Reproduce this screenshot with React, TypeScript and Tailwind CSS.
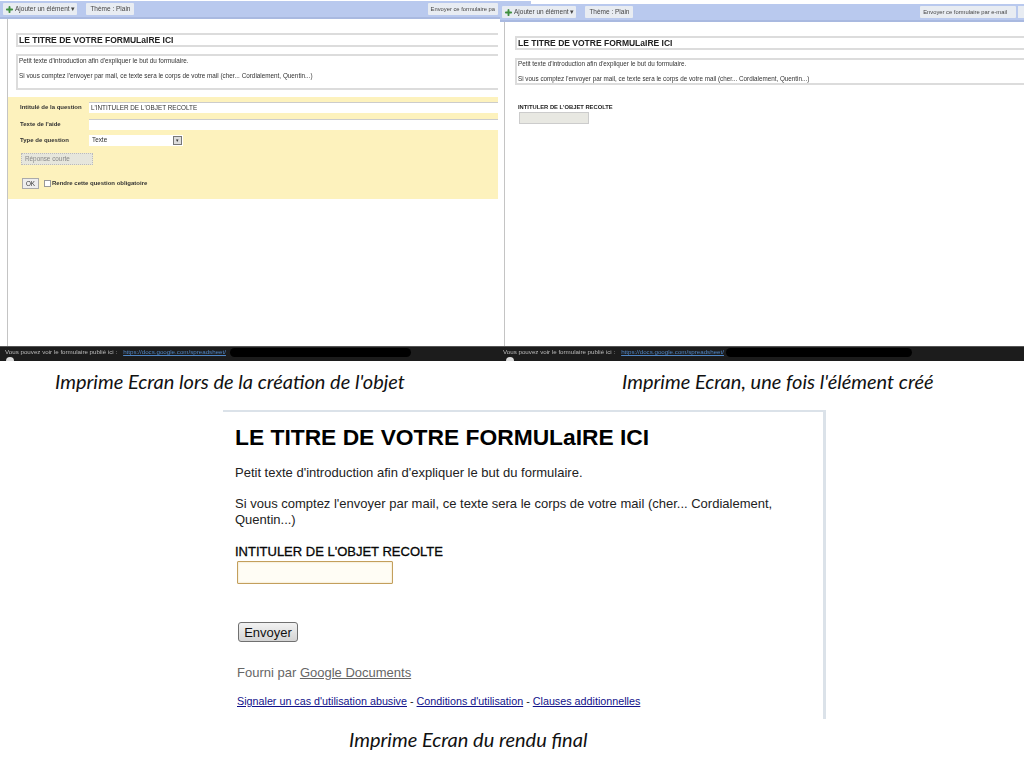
import React from 'react';
import { Plus } from 'lucide-react';

const Toolbar = ({ sendLabel, sendClass, className, stub }: { sendLabel: string; sendClass: string; className: string; stub?: boolean }) => (
  <div className={`flex items-center bg-[#b9c9ee] border-b-2 border-[#a9b9e0] text-[6.5px] text-[#444] ${className}`}>
    <div className="flex h-[12px] items-center bg-[#e8ecf2] px-[2px] rounded-[1px]">
      <Plus size={9} strokeWidth={5} className="text-[#3f8f3f]" />
      <span className="ml-[1px]">Ajouter un élément ▾</span>
    </div>
    <div className="ml-[9px] flex h-[12px] items-center bg-[#e8ecf2] px-[4px] rounded-[1px]">Thème : Plain</div>
    <div className={`ml-auto flex h-[12px] items-center bg-[#e8ecf2] rounded-[1px] whitespace-nowrap text-[5.8px] ${sendClass}`}>{sendLabel}</div>
    {stub && <div className="ml-[2px] h-[12px] w-[6px] bg-[#e8ecf2]"></div>}
  </div>
);

const DarkFooter = ({ pad, linkGap, blobClass }: { pad: string; linkGap: string; blobClass: string }) => (
  <div className="relative h-[15px] bg-[#1c1c1c] border-t border-[#555] text-[6.2px] text-[#bbb] overflow-hidden">
    <div className={`flex items-center h-[10px] whitespace-nowrap ${pad}`}>
      <span>Vous pouvez voir le formulaire publié ici :</span>
      <span className={`text-[#4f86c6] underline ${linkGap}`}>https://docs.google.com/spreadsheet/</span>
      <span className={`h-[9px] rounded-full bg-black ${blobClass}`}></span>
    </div>
    <div className="absolute left-[6px] bottom-[-4px] size-[8px] rounded-full bg-[#ddd]"></div>
  </div>
);

const Caption = ({ children, className }: { children: React.ReactNode; className: string }) => (
  <div className={`font-['Lato',sans-serif] italic text-[20px] leading-[20px] text-[#111] whitespace-nowrap ${className}`}>{children}</div>
);

export default function App() {
  return (
    <div className="relative h-[768px] w-[1024px] overflow-hidden bg-white font-['Liberation_Sans',Arial,sans-serif]">
      {/* bit of the left toolbar sticking out above the right shot */}
      <div className="absolute left-[500px] top-[1px] h-[3px] w-[31px] bg-[#b9c9ee]"></div>

      {/* two shots of the form editor */}
      <div className="flex h-[361px] blur-[0.5px]">
        {/* left: creating the question */}
        <div className="flex w-[500px] flex-col pt-px">
          <Toolbar sendLabel="Envoyer ce formulaire pa" sendClass="px-[3px]" className="h-[18px] pl-[3px] pr-[2px]" />
          <div className="ml-[7px] flex-1 border-l border-[#c4c4c4] pr-[2px] pt-[14px]">
            <div className="ml-[8px] flex h-[14px] items-center border-y-2 border-l-2 border-[#dcdcdc] pl-[1px] text-[8.5px] font-bold text-[#222]">
              LE TITRE DE VOTRE FORMULaIRE ICI
            </div>
            <div className="ml-[8px] mt-[7px] h-[36px] border-2 border-r-0 border-[#dcdcdc] pl-px pt-[1px] text-[6.35px] leading-[8px] text-[#333]">
              <p>Petit texte d'introduction afin d'expliquer le but du formulaire.</p>
              <p className="mt-[7px]">Si vous comptez l'envoyer par mail, ce texte sera le corps de votre mail (cher... Cordialement, Quentin...)</p>
            </div>
            <div className="mt-[7px] h-[102px] bg-[#fdf2bd] pt-[4px] text-[6.35px] text-[#333]">
              <div className="flex h-[12px] items-center">
                <span className="w-[81px] pl-[12px] text-[6px] font-bold">Intitulé de la question</span>
                <div className="flex h-[11px] flex-1 items-center bg-white pl-[2px] border-t border-[#ccc]">L'INTITULER DE L'OBJET RECOLTE</div>
              </div>
              <div className="mt-[5px] flex h-[12px] items-center">
                <span className="w-[81px] pl-[12px] text-[6px] font-bold">Texte de l'aide</span>
                <div className="h-[11px] flex-1 bg-white border-t border-[#ccc]"></div>
              </div>
              <div className="mt-[4px] flex h-[12px] items-center">
                <span className="w-[81px] pl-[12px] text-[6px] font-bold">Type de question</span>
                <div className="flex h-[11px] w-[94px] items-center justify-between bg-white pl-[3px] pr-px">
                  Texte
                  <span className="flex size-[9px] items-center justify-center border border-[#777] bg-[#ddd] text-[5px] leading-none">▾</span>
                </div>
              </div>
              <div className="ml-[13px] mt-[7px] flex h-[12px] w-[72px] items-center border border-dotted border-[#bbb] bg-[#e6e6dc] pl-[3px] text-[#888]">Réponse courte</div>
              <div className="mt-[13px] flex items-center pl-[14px]">
                <div className="flex h-[11px] w-[17px] items-center justify-center border border-[#aaa] bg-[#eee]">OK</div>
                <div className="ml-[5px] size-[7px] border border-[#999] bg-white"></div>
                <span className="ml-[1px] text-[6px] font-bold">Rendre cette question obligatoire</span>
              </div>
            </div>
          </div>
          <DarkFooter pad="pl-[5px]" linkGap="ml-[6px]" blobClass="ml-[4px] w-[181px]" />
        </div>

        {/* right: once the item exists */}
        <div className="flex flex-1 flex-col pt-[4px]">
          <Toolbar sendLabel="Envoyer ce formulaire par e-mail" sendClass="pl-[3px] pr-[9px]" className="h-[18px] pl-[2px] pr-0" stub />
          <div className="ml-[4px] flex-1 border-l border-[#c4c4c4] pt-[14px]">
            <div className="ml-[10px] flex h-[14px] items-center border-y-2 border-l-2 border-[#dcdcdc] pl-px text-[8.5px] font-bold text-[#222]">
              LE TITRE DE VOTRE FORMULaIRE ICI
            </div>
            <div className="ml-[10px] mt-[8px] h-[27px] border-2 border-r-0 border-[#dcdcdc] pl-px text-[6.3px] leading-[8px] text-[#333]">
              <p>Petit texte d'introduction afin d'expliquer le but du formulaire.</p>
              <p className="mt-[7px]">Si vous comptez l'envoyer par mail, ce texte sera le corps de votre mail (cher... Cordialement, Quentin...)</p>
            </div>
            <div className="ml-[13px] mt-[18px] text-[5.8px] font-bold leading-[8px] text-[#222]">INTITULER DE L'OBJET RECOLTE</div>
            <div className="ml-[14px] mt-[1px] h-[12px] w-[70px] border border-[#ccc] bg-[#e8e8e2]"></div>
          </div>
          <DarkFooter pad="pl-[3px]" linkGap="ml-[6px]" blobClass="ml-[2px] w-[186px]" />
        </div>
      </div>

      <div className="flex h-[40px] items-center">
        <Caption className="ml-[55px] w-[567px]">Imprime Ecran lors de la création de l'objet</Caption>
        <Caption>Imprime Ecran, une fois l'élément créé</Caption>
      </div>

      {/* final render */}
      <div className="ml-[223px] mt-[9px] h-[309px] w-[603px] border-r-[3px] border-t-2 border-[#dbe2e9] pl-[12px] pt-[12px] text-black">
        <h1 className="text-[22.8px] font-bold leading-[26px]">LE TITRE DE VOTRE FORMULaIRE ICI</h1>
        <div className="mt-[15px] pr-[30px] text-[13px] leading-[16px] text-[#222]">
          <p>Petit texte d'introduction afin d'expliquer le but du formulaire.</p>
          <p className="mt-[15px]">Si vous comptez l'envoyer par mail, ce texte sera le corps de votre mail (cher... Cordialement, Quentin...)</p>
        </div>
        <div className="mt-[16px] text-[13px] leading-[16px] [-webkit-text-stroke:0.3px_#111]">INTITULER DE L'OBJET RECOLTE</div>
        <input readOnly className="ml-[2px] mt-[1px] block h-[23px] w-[156px] border border-[#c39f5c] bg-[#fffdf5] rounded-[1px] shadow-[inset_0_0_2px_#e6d5a8]" />
        <button className="ml-[3px] mt-[38px] block h-[20px] w-[60px] rounded-[3px] border border-[#707070] bg-gradient-to-b from-[#f2f2f2] to-[#d4d4d4] text-[13px] leading-none text-[#111]">Envoyer</button>
        <div className="ml-[2px] mt-[23px] text-[13px] leading-[16px] text-[#666]">
          Fourni par <span className="underline">Google Documents</span>
        </div>
        <div className="ml-[2px] mt-[13px] text-[10.75px] leading-[14px] text-[#222]">
          <span className="text-[#11118a] underline">Signaler un cas d'utilisation abusive</span> - <span className="text-[#11118a] underline">Conditions d'utilisation</span> - <span className="text-[#11118a] underline">Clauses additionnelles</span>
        </div>
      </div>

      <Caption className="ml-[349px] mt-[10px]">Imprime Ecran du rendu final</Caption>
    </div>
  );
}
